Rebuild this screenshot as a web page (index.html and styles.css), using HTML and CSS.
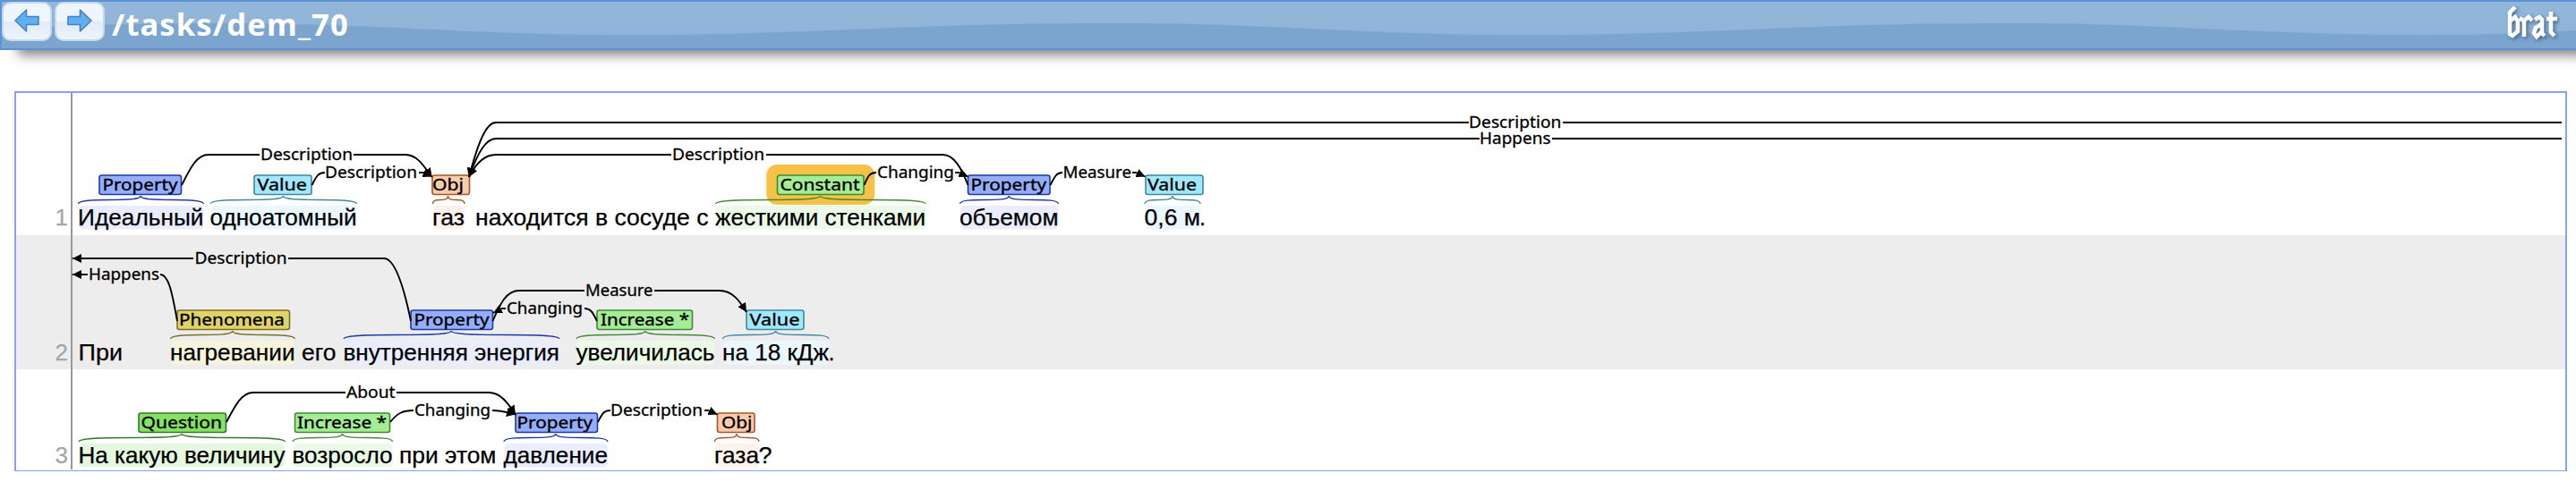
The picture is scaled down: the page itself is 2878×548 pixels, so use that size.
FILE: index.html
```
<!DOCTYPE html>
<html lang="ru">
<head>
<meta charset="utf-8">
<title>brat</title>
<link rel="stylesheet" href="styles.css">
</head>
<body>
<header class="header">
  <svg class="wave" viewBox="0 0 2878 52" preserveAspectRatio="none" aria-hidden="true"><path d="M0 30C80 26 160 24 239 24C430 24 510 37 707 37C920 37 1000 24 1243 24C1430 24 1510 37 1707 37C1920 37 2000 24 2248 24C2430 24 2510 37 2707 37C2780 37 2830 35 2878 32V52H0Z"/></svg>
  <nav class="nav">
    <button class="nav-btn" aria-label="Previous"><svg viewBox="0 0 28 26"><path class="arrow-icon" d="M1 13 13.500 1 V8.500 H27 V17.500 H13.500 V25Z"/></svg></button>
    <button class="nav-btn" aria-label="Next"><svg viewBox="0 0 28 26"><path class="arrow-icon" d="M27 13 14.500 1 V8.500 H1 V17.500 H14.500 V25Z"/></svg></button>
  </nav>
  <h1 class="doc">/tasks/dem_70</h1>
  <svg class="logo" viewBox="0 0 60 44" role="img" aria-label="brat">
    <path d="M10 4 4 10V34L7 36 13 31V20L10 15 5 19M15 16 20 20V37M20 19 25 15 29 19M32 18 37 15 40 18V33L43 36M39 23 33 27 31 33 34 37 39 32M50 9V32L54 36M45 17H57"/>
  </svg>
</header>
<main class="panel">
<svg id="canvas" class="canvas" viewBox="18 104 2848 422">
  <defs>
    <marker id="head" viewBox="0 0 10 10" refX="10" refY="5" markerWidth="10" markerHeight="10" markerUnits="userSpaceOnUse" orient="auto-start-reverse"><path d="M0 0 10 5 0 10Z"/></marker>
  </defs>
  <rect class="stripe" x="18" y="263" width="2848" height="150"/>
  <path class="gutter" d="M80 104V525"/>
</svg>
</main>
<script src="main.js"></script>
</body>
</html>
```
FILE: styles.css
```
body { margin: 0; background: #fff; overflow: hidden; font-family: "Noto Sans", sans-serif; }
.header { position: relative; box-sizing: border-box; height: 56px; border: 2px solid #5b94d6; border-right: 0; background: linear-gradient(#93b6db, #8fb2d6); display: flex; align-items: flex-start; box-shadow: 16px 10px 12px -4px #888; }
.wave { position: absolute; inset: 0; width: 100%; height: 100%; }
.wave path { fill: #7ba5cf; }
.nav { position: relative; display: flex; gap: 3px; }
.nav-btn { box-sizing: border-box; width: 56px; height: 44px; padding: 0 0 2px; border: 2px solid #c5d9ec; border-radius: 10px; background: linear-gradient(#eef5fc 50%, #dfebf8 50%, #edf4fb); display: flex; align-items: center; justify-content: center; }
.nav-btn svg { width: 28px; height: 26px; }
.arrow-icon { fill: #5eb0ee; stroke: #4b7fc6; stroke-width: 1.6; stroke-linejoin: round; }
.doc { position: relative; margin: 3px 0 0 8px; font: bold 34.6px/44px "Noto Sans", sans-serif; letter-spacing: 1.1px; color: #fff; }
.logo { position: relative; width: 60px; height: 44px; margin: 2px 18px 0 auto; }
.logo path { fill: none; stroke: #fff; stroke-width: 4.5; filter: drop-shadow(2px 2px 2px #47688c); }
.panel { box-sizing: border-box; width: 2852px; height: 425px; margin: 46px 0 0 16px; border: 2px solid #88a0f8; border-bottom-width: 1px; }
.canvas { display: block; width: 2848px; height: 422px; }
.stripe { fill: #ededed; }
.gutter { stroke: #999; stroke-width: 2; }
.word { font: 26px "Liberation Sans", sans-serif; white-space: pre; stroke: #000; stroke-width: .25; }
.num { font: 26px "Liberation Sans", sans-serif; fill: #a6a6a6; stroke: #a6a6a6; stroke-width: .25; text-anchor: end; }
.label { font: 18.6px "Noto Sans", sans-serif; stroke: #000; stroke-width: .35; }
.arc-label { font: 17.5px "Noto Sans", sans-serif; stroke: #000; stroke-width: .3; }
.arc { fill: none; stroke: #000; stroke-width: 1.9; }
.brace { fill: none; stroke-width: 1.3; }
.tag { stroke-width: 1.6; }
.focus { fill: #f6c144; }
.property .tag { fill: #95adfb; } .property { --line: #1d3aa8; } .property .mark { fill: #e9edff; }
.value .tag { fill: #a2e8fd; } .value { --line: #3f87a0; } .value .mark { fill: #eaf7fe; }
.obj .tag { fill: #f8ccab; } .obj { --line: #ad5427; } .obj .mark { fill: #fdf1ec; }
.green .tag { fill: #a5ec96; } .green { --line: #418a34; } .green .mark { fill: #eafae7; }
.phenomena .tag { fill: #e0d468; } .phenomena { --line: #7b7020; } .phenomena .mark { fill: #f7f4dc; }
.question .tag { fill: #86e063; } .question { --line: #34792a; } .question .mark { fill: #e4f7df; }
.tag, .brace { stroke: var(--line); }
```
FILE: main.js
```
const NS = "http://www.w3.org/2000/svg";
const canvas = document.getElementById("canvas");

function add(parent, name, attrs, text) {
  const el = document.createElementNS(NS, name);
  for (const key in attrs) el.setAttribute(key, attrs[key]);
  if (text) el.textContent = text;
  parent.appendChild(el);
  return el;
}

function fitted(parent, cls, text, from, to, y) {
  add(parent, "text", { class: cls, x: from, y, textLength: to - from, lengthAdjust: "spacingAndGlyphs" }, text);
}

// span: type, text, text from, text to, label, box from, box to, label from, label to
const rows = [
  { n: "1", y: 252, plain: [["находится в сосуде с", 531, 791.5], [".", 1340, 1347]], spans: [
    ["property", "Идеальный", 87, 227.5, "Property", 111, 202.5, 114.5, 198.5],
    ["value", "одноатомный", 234.5, 398.5, "Value", 284, 348, 287.5, 343],
    ["obj", "газ", 483, 519, "Obj", 483, 524.500, 483, 518],
    ["green", "жесткими стенками", 799, 1034, "Constant", 868.5, 965, 871.500, 960.5, true],
    ["property", "объемом", 1072, 1182.5, "Property", 1081.5, 1173, 1084.500, 1169],
    ["value", "0,6 м", 1278.5, 1341, "Value", 1280, 1344, 1282, 1337]] },
  { n: "2", y: 403, plain: [["При", 87.5, 137], ["его", 337, 375.5], [".", 925.5, 932.5]], spans: [
    ["phenomena", "нагревании", 190, 329.5, "Phenomena", 198, 323.5, 200, 318],
    ["property", "внутренняя энергия", 383.5, 625, "Property", 459, 550.5, 462.5, 546.5],
    ["green", "увеличилась", 643.5, 798.5, "Increase *", 667, 773.5, 671, 770],
    ["value", "на 18 кДж", 807, 926, "Value", 834, 898, 837.5, 893.5]] },
  { n: "3", y: 518, plain: [["при этом", 446, 554.5], ["?", 847.5, 862.5]], spans: [
    ["question", "На какую величину", 87.5, 318.5, "Question", 155, 252.5, 157.5, 248],
    ["green", "возросло", 326.5, 438.5, "Increase *", 329.5, 435.5, 332, 432],
    ["property", "давление", 562.5, 679, "Property", 576, 667.5, 577.5, 662],
    ["obj", "газа", 798, 848, "Obj", 801.5, 843, 806, 840.500]] }
];

for (const row of rows) {
  const y = row.y;
  add(canvas, "text", { class: "num", x: 76, y }, row.n);
  for (const [type, text, a, b, label, c, d, e, f, focus] of row.spans) {
    const g = add(canvas, "g", { class: type });
    const mid = (c + d) / 2;
    const peak = text === "газ" ? 500.5 : text === "0,6 м" ? 1310 : text === "газа" ? 823 : (a + b) / 2;
    if (focus) add(g, "rect", { class: "focus", x: mid - 60.5, y: y - 68, width: 121, height: 45, rx: 12 });
    add(g, "rect", { class: "mark", x: a + 1, y: y - 22, width: b - a - 1, height: 26.5, rx: 5 });
    add(g, "path", { class: "brace", d: `M${a + .5} ${y - 24}C${a + .5} ${y - 33} ${peak} ${y - 24} ${peak} ${y - 33}C${peak} ${y - 24} ${b} ${y - 33} ${b} ${y - 24}` });
    add(g, "rect", { class: "tag", x: c, y: y - 56, width: d - c, height: 21.5, rx: 2.5 });
    fitted(g, "label", label, e, f, y - 39);
    fitted(g, "word", text, a, b, y);
  }
  for (const [text, a, b] of row.plain) fitted(canvas, "word", text, a, b, y);
}

// arc: label, label from, label to, line y, left path, right path, arrow side
const arcs = [
  ["Description", 291, 394, 173, "M203 207C213 187 220 173 233 173H290", "M395 173H453C465 173 472 183 482.500 198", "r"],
  ["Description", 363, 466, 193, "M348.500 207C354 196 356 193 363 193", "M468 193H472L482.500 197.500", "r"],
  ["Description", 1641, 1744.5, 137, "M524 198C534 160 543 137 554 137H1641", "M1746 137H2862", "l"],
  ["Happens", 1653, 1732.5, 155, "M524 198C534 170 543 155 554 155H1653", "M1734 155H2862", "l"],
  ["Description", 751, 854, 173, "M524 198C532 182 542 173 554 173H750", "M856 173H1053C1066 173 1074 188 1081.500 207", "l"],
  ["Changing", 980, 1066, 193, "M965.500 207C970 196 972 193 979 193", "M1067 193H1071L1081.500 197.500", "r"],
  ["Measure", 1187.500, 1264, 193, "M1173.500 207C1179 196 1181 193 1187 193", "M1265 193H1269L1279.500 197.500", "r"],
  ["Description", 217.500, 320.5, 289, "M81 289H216", "M322 289H429C442 289 452 325 459 359", "l"],
  ["Happens", 99, 178, 307, "M81 307H98", "M179 307C188 307 192 325 198 359", "l"],
  ["Measure", 654, 729.5, 325, "M550.500 359C559 339 566 325 580 325H653", "M731 325H804C818 325 826 336 834 349", "r"],
  ["Changing", 566, 651, 345, "M551 350L561 345H565", "M653 345C660 345 662 349 667 359", "l"],
  ["About", 387, 441.5, 439, "M253 472C263 453 270 439 283 439H386", "M443 439H546C559 439 567 450 576 463.500", "r"],
  ["Changing", 463, 548, 459, "M436 472C444 462 450 459 462 459", "M550 459C560 459 562 460 576 463.500", "r"],
  ["Description", 682, 785, 459, "M668 472C673 462 675 459 682 459", "M787 459H791L801.500 463.500", "r"]
];

for (const [label, a, b, y, left, right, side] of arcs) {
  const l = add(canvas, "path", { class: "arc", d: left });
  const r = add(canvas, "path", { class: "arc", d: right });
  if (side === "l") l.setAttribute("marker-start", "url(#head)");
  else r.setAttribute("marker-end", "url(#head)");
  fitted(canvas, "arc-label", label, a, b, y + 6);
}
```
